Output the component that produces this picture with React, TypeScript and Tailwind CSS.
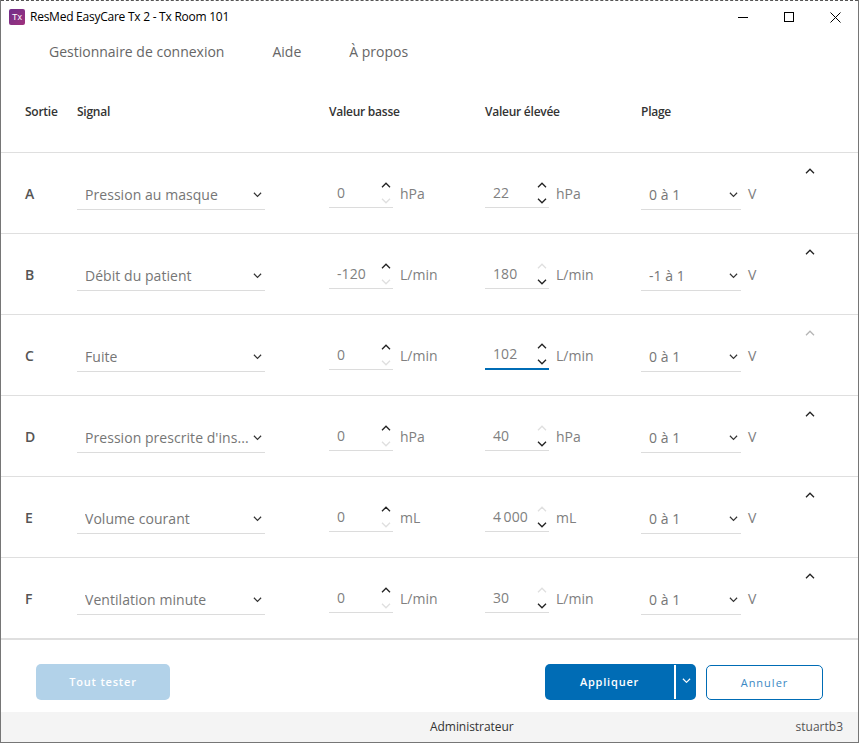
import React from "react";

const Chev = ({ up = false, className = "", size = 10 }: { up?: boolean; className?: string; size?: number }) => (
  <svg width={size} height={size * 0.6} viewBox="0 0 10 6" fill="none" stroke="currentColor" strokeWidth="1.3" className={className}>
    <path d={up ? "M1 5.2 5 1.2 9 5.2" : "M1 .8 5 4.8 9 .8"} />
  </svg>
);

function Select({ value, w }: { value: string; w: string }) {
  return (
    <div className={`${w} h-[30px] flex items-center justify-between border-b border-[#dcdcdc] pl-2 pr-[3px] pb-[1px] text-[14px] text-[#767676] tracking-[0.05px]`}>
      <span className="whitespace-nowrap overflow-hidden">{value}</span>
      <Chev className="text-[#333] shrink-0 mt-[2px]" size={9} />
    </div>
  );
}

function Spin({ value, unit, upOff, downOff, focus }: { value: string; unit: string; upOff?: boolean; downOff?: boolean; focus?: boolean }) {
  return (
    <div className="flex w-[156px] items-start">
      <div className={`w-[64px] h-[30px] flex items-center justify-between pl-2 pr-[2px] pb-[1px] text-[14px] text-[#808080] ${focus ? "border-b-2 border-[#006cb5]" : "border-b border-[#dcdcdc]"}`}>
        <span className="tracking-[0.1px]">{value}</span>
        <div className="flex flex-col items-center gap-[10px] pt-[1px]">
          <Chev up className={upOff ? "text-[#dfdfdf]" : "text-[#222]"} />
          <Chev className={downOff ? "text-[#dfdfdf]" : "text-[#222]"} />
        </div>
      </div>
      <span className="ml-[7px] mt-[6px] text-[14px] leading-[20px] text-[#808080]">{unit}</span>
    </div>
  );
}

const rows = [
  { id: "A", sig: "Pression au masque", lo: "0", lu: "hPa", hi: "22", hu: "hPa", pl: "0 à 1", loDown: true },
  { id: "B", sig: "Débit du patient", lo: "-120", lu: "L/min", hi: "180", hu: "L/min", pl: "-1 à 1", loDown: true, hiUp: true },
  { id: "C", sig: "Fuite", lo: "0", lu: "L/min", hi: "102", hu: "L/min", pl: "0 à 1", loDown: true, focus: true, caretOff: true },
  { id: "D", sig: "Pression prescrite d'ins...", lo: "0", lu: "hPa", hi: "40", hu: "hPa", pl: "0 à 1", loDown: true, hiUp: true },
  { id: "E", sig: "Volume courant", lo: "0", lu: "mL", hi: "4\u2009000", hu: "mL", pl: "0 à 1", loDown: true, hiUp: true },
  { id: "F", sig: "Ventilation minute", lo: "0", lu: "L/min", hi: "30", hu: "L/min", pl: "0 à 1", loDown: true, hiUp: true },
];

export default function App() {
  return (
    <div className="w-[859px] h-[743px] bg-white flex flex-col border-x border-b border-[#767676] font-['Open_Sans',sans-serif] overflow-hidden">
      <div className="h-[33px] flex items-center shrink-0 border-t border-[#555] border-dashed">
        <div className="ml-[8px] w-4 h-4 rounded-[2px] bg-gradient-to-br from-[#6f2d8a] to-[#a0307c] text-white text-[9px] leading-[16px] text-center font-['Liberation_Sans',sans-serif]">Tx</div>
        <span className="ml-[5px] text-[12px] text-black font-['Open_Sans',sans-serif] tracking-[-0.25px] whitespace-nowrap">ResMed EasyCare Tx 2 - Tx Room 101</span>
        <div className="ml-auto flex items-center">
          <div className="w-[46px] flex justify-center"><div className="w-[10px] h-px bg-black" /></div>
          <div className="w-[46px] flex justify-center"><div className="w-[10px] h-[10px] border border-black" /></div>
          <div className="w-[46px] flex justify-center">
            <svg width="11" height="11" viewBox="0 0 11 11" stroke="black" strokeWidth="1"><path d="M.5.5l10 10M10.5.5l-10 10" /></svg>
          </div>
        </div>
      </div>

      <nav className="h-[36px] shrink-0 flex items-center pl-[48px] gap-[48px] text-[14px] text-[#666]">
        <span>Gestionnaire de connexion</span>
        <span>Aide</span>
        <span>À propos</span>
      </nav>

      <div className="h-[84px] shrink-0 flex items-center pl-[24px] pt-[3px] text-[12px] font-semibold text-[#333] tracking-[-0.25px] border-b border-[#dfdfdf]">
        <span className="w-[52px]">Sortie</span>
        <span className="w-[252px]">Signal</span>
        <span className="w-[156px]">Valeur basse</span>
        <span className="w-[156px]">Valeur élevée</span>
        <span>Plage</span>
      </div>

      {rows.map((r, i) => (
        <div key={r.id} className={`shrink-0 flex items-start pl-[24px] pt-[27px] border-[#dfdfdf] ${i === 5 ? "h-[82px] border-b-2" : "h-[81px] border-b"}`}>
          <span className="w-[52px] mt-[4px] text-[14px] leading-[20px] font-semibold text-[#555]">{r.id}</span>
          <div className="w-[252px]"><Select value={r.sig} w="w-[188px]" /></div>
          <div className="-mt-[2px]"><Spin value={r.lo} unit={r.lu} downOff={r.loDown} /></div>
          <div className="-mt-[2px]"><Spin value={r.hi} unit={r.hu} upOff={r.hiUp} focus={r.focus} /></div>
          <Select value={r.pl} w="w-[100px]" />
          <span className="ml-[7px] mt-[4px] text-[14px] leading-[20px] text-[#808080]">V</span>
          <div className={`ml-[49px] -mt-[12px] ${r.caretOff ? "text-[#b5b5b5]" : "text-[#222]"}`}><Chev up /></div>
        </div>
      ))}

      <div className="flex-1 flex items-center pl-[35px] pr-[35px] pt-[12px]">
        <button className="w-[134px] h-[36px] pt-[1px] rounded-[5px] bg-[#b2d2e9] text-white text-[11px] font-semibold tracking-[0.8px]">Tout tester</button>
        <div className="ml-auto h-[36px] w-[151px] rounded-[5px] bg-[#006cb5] flex items-center text-white">
          <span className="w-[129px] pt-[1px] text-center text-[11px] font-semibold tracking-[0.8px]">Appliquer</span>
          <div className="w-[2px] h-[34px] bg-white" />
          <div className="flex-1 flex justify-center pb-[3px]"><Chev size={9} /></div>
        </div>
        <button className="ml-[10px] w-[117px] h-[35px] pt-[2px] rounded-[5px] border border-[#006cb5] text-[#3a88c4] text-[11px] tracking-[1px]">Annuler</button>
      </div>

      <footer className="h-[30px] shrink-0 bg-[#f4f4f4] flex items-center relative text-[12px]">
        <span className="absolute left-[429px] font-medium text-[#333] tracking-[-0.05px]">Administrateur</span>
        <span className="ml-auto pr-[15px] text-[#555]">stuartb3</span>
      </footer>
    </div>
  );
}
